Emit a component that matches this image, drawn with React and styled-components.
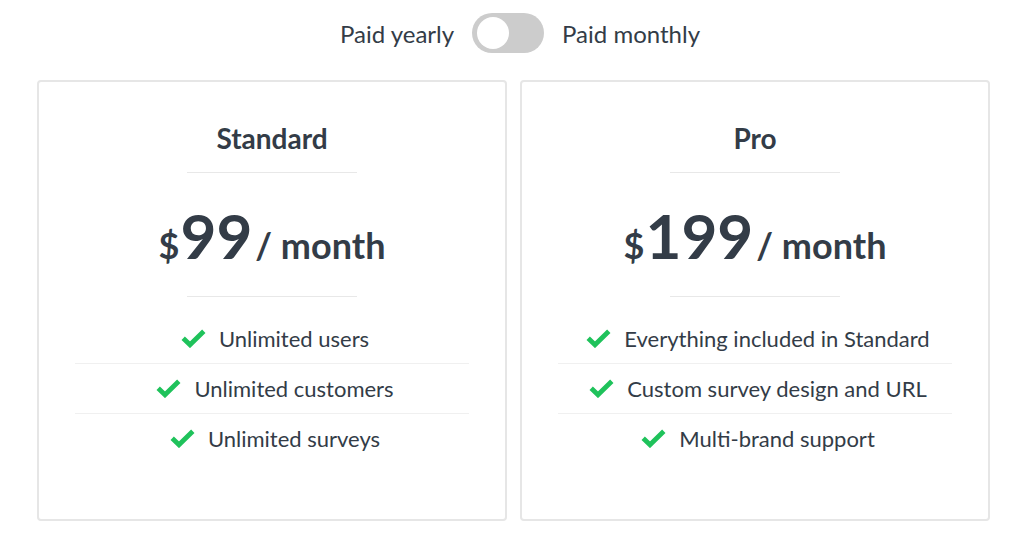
import React, { useState } from 'react';
import styled, { createGlobalStyle } from 'styled-components';

const GlobalStyle = createGlobalStyle`
  body {
    margin: 0;
    background: #fff;
    font-family: Lato, "Open Sans", sans-serif;
    color: #333c47;
  }
`;

const Page = styled.div`
  display: flex;
  flex-direction: column;
  align-items: center;
  padding-top: 13px;
`;

const ToggleRow = styled.div`
  display: flex;
  align-items: center;
  gap: 18px;
  font-size: 24px;
  margin-left: 16px;
`;

const Switch = styled.button`
  position: relative;
  width: 72px;
  height: 40px;
  border: none;
  border-radius: 20px;
  background: ${(props) => (props.$on ? '#22c55e' : '#cccccc')};
  cursor: pointer;
  padding: 0;

  &::after {
    content: '';
    position: absolute;
    top: 4px;
    left: ${(props) => (props.$on ? '36px' : '5px')};
    width: 32px;
    height: 32px;
    border-radius: 50%;
    background: #fff;
    transition: left 0.2s;
  }
`;

const Cards = styled.div`
  display: flex;
  gap: 13px;
  margin-top: 27px;
  margin-left: 3px;
`;

const Card = styled.div`
  width: 470px;
  height: 441px;
  box-sizing: border-box;
  border: 2px solid #e6e6e6;
  border-radius: 4px;
  padding: 38px 36px 0;
  display: flex;
  flex-direction: column;
  align-items: center;
`;

const Title = styled.h2`
  margin: 0;
  font-size: 28px;
  font-weight: 700;
  line-height: 36px;
`;

const Divider = styled.hr`
  width: 170px;
  border: none;
  border-top: 1px solid #e8e8e8;
  margin: ${(props) => props.$margin};
`;

const Price = styled.div`
  display: flex;
  align-items: baseline;
  gap: 1px;
  font-weight: 700;
  line-height: 1;
  margin-top: 31px;
`;

const Currency = styled.span`
  font-size: 36px;
`;

const Amount = styled.span`
  font-size: 62px;
  margin-right: 2px;
`;

const Period = styled.span`
  font-size: 36px;
`;

const Features = styled.ul`
  list-style: none;
  margin: 17px 0 0;
  padding: 0;
  width: 100%;
`;

const Feature = styled.li`
  display: flex;
  align-items: center;
  justify-content: center;
  gap: 13px;
  height: 49px;
  padding-left: 6px;
  font-size: 22px;
  & + & {
    border-top: 1px solid #f0f0f0;
  }
`;

const Check = () => (
  <svg width="25" height="19" viewBox="0 0 25 19">
    <path d="M2.2 9.2 L9 15.8 L22.8 2.3" fill="none" stroke="#1fc25b" strokeWidth="4.8" />
  </svg>
);

const plans = [
  { name: 'Standard', price: 99, features: ['Unlimited users', 'Unlimited customers', 'Unlimited surveys'] },
  { name: 'Pro', price: 199, features: ['Everything included in Standard', 'Custom survey design and URL', 'Multi-brand support'] },
];

export default function App() {
  const [monthly, setMonthly] = useState(false);
  return (
    <Page>
      <GlobalStyle />
      <ToggleRow>
        <span>Paid yearly</span>
        <Switch $on={monthly} onClick={() => setMonthly(!monthly)} aria-label="billing period" />
        <span>Paid monthly</span>
      </ToggleRow>
      <Cards>
        {plans.map((plan) => (
          <Card key={plan.name}>
            <Title>{plan.name}</Title>
            <Divider $margin="16px 0 0" />
            <Price>
              <Currency>$</Currency>
              <Amount>{plan.price}</Amount>
              <Period>/ month</Period>
            </Price>
            <Divider $margin="30px 0 0" />
            <Features>
              {plan.features.map((f) => (
                <Feature key={f}>
                  <Check />
                  <span>{f}</span>
                </Feature>
              ))}
            </Features>
          </Card>
        ))}
      </Cards>
    </Page>
  );
}
